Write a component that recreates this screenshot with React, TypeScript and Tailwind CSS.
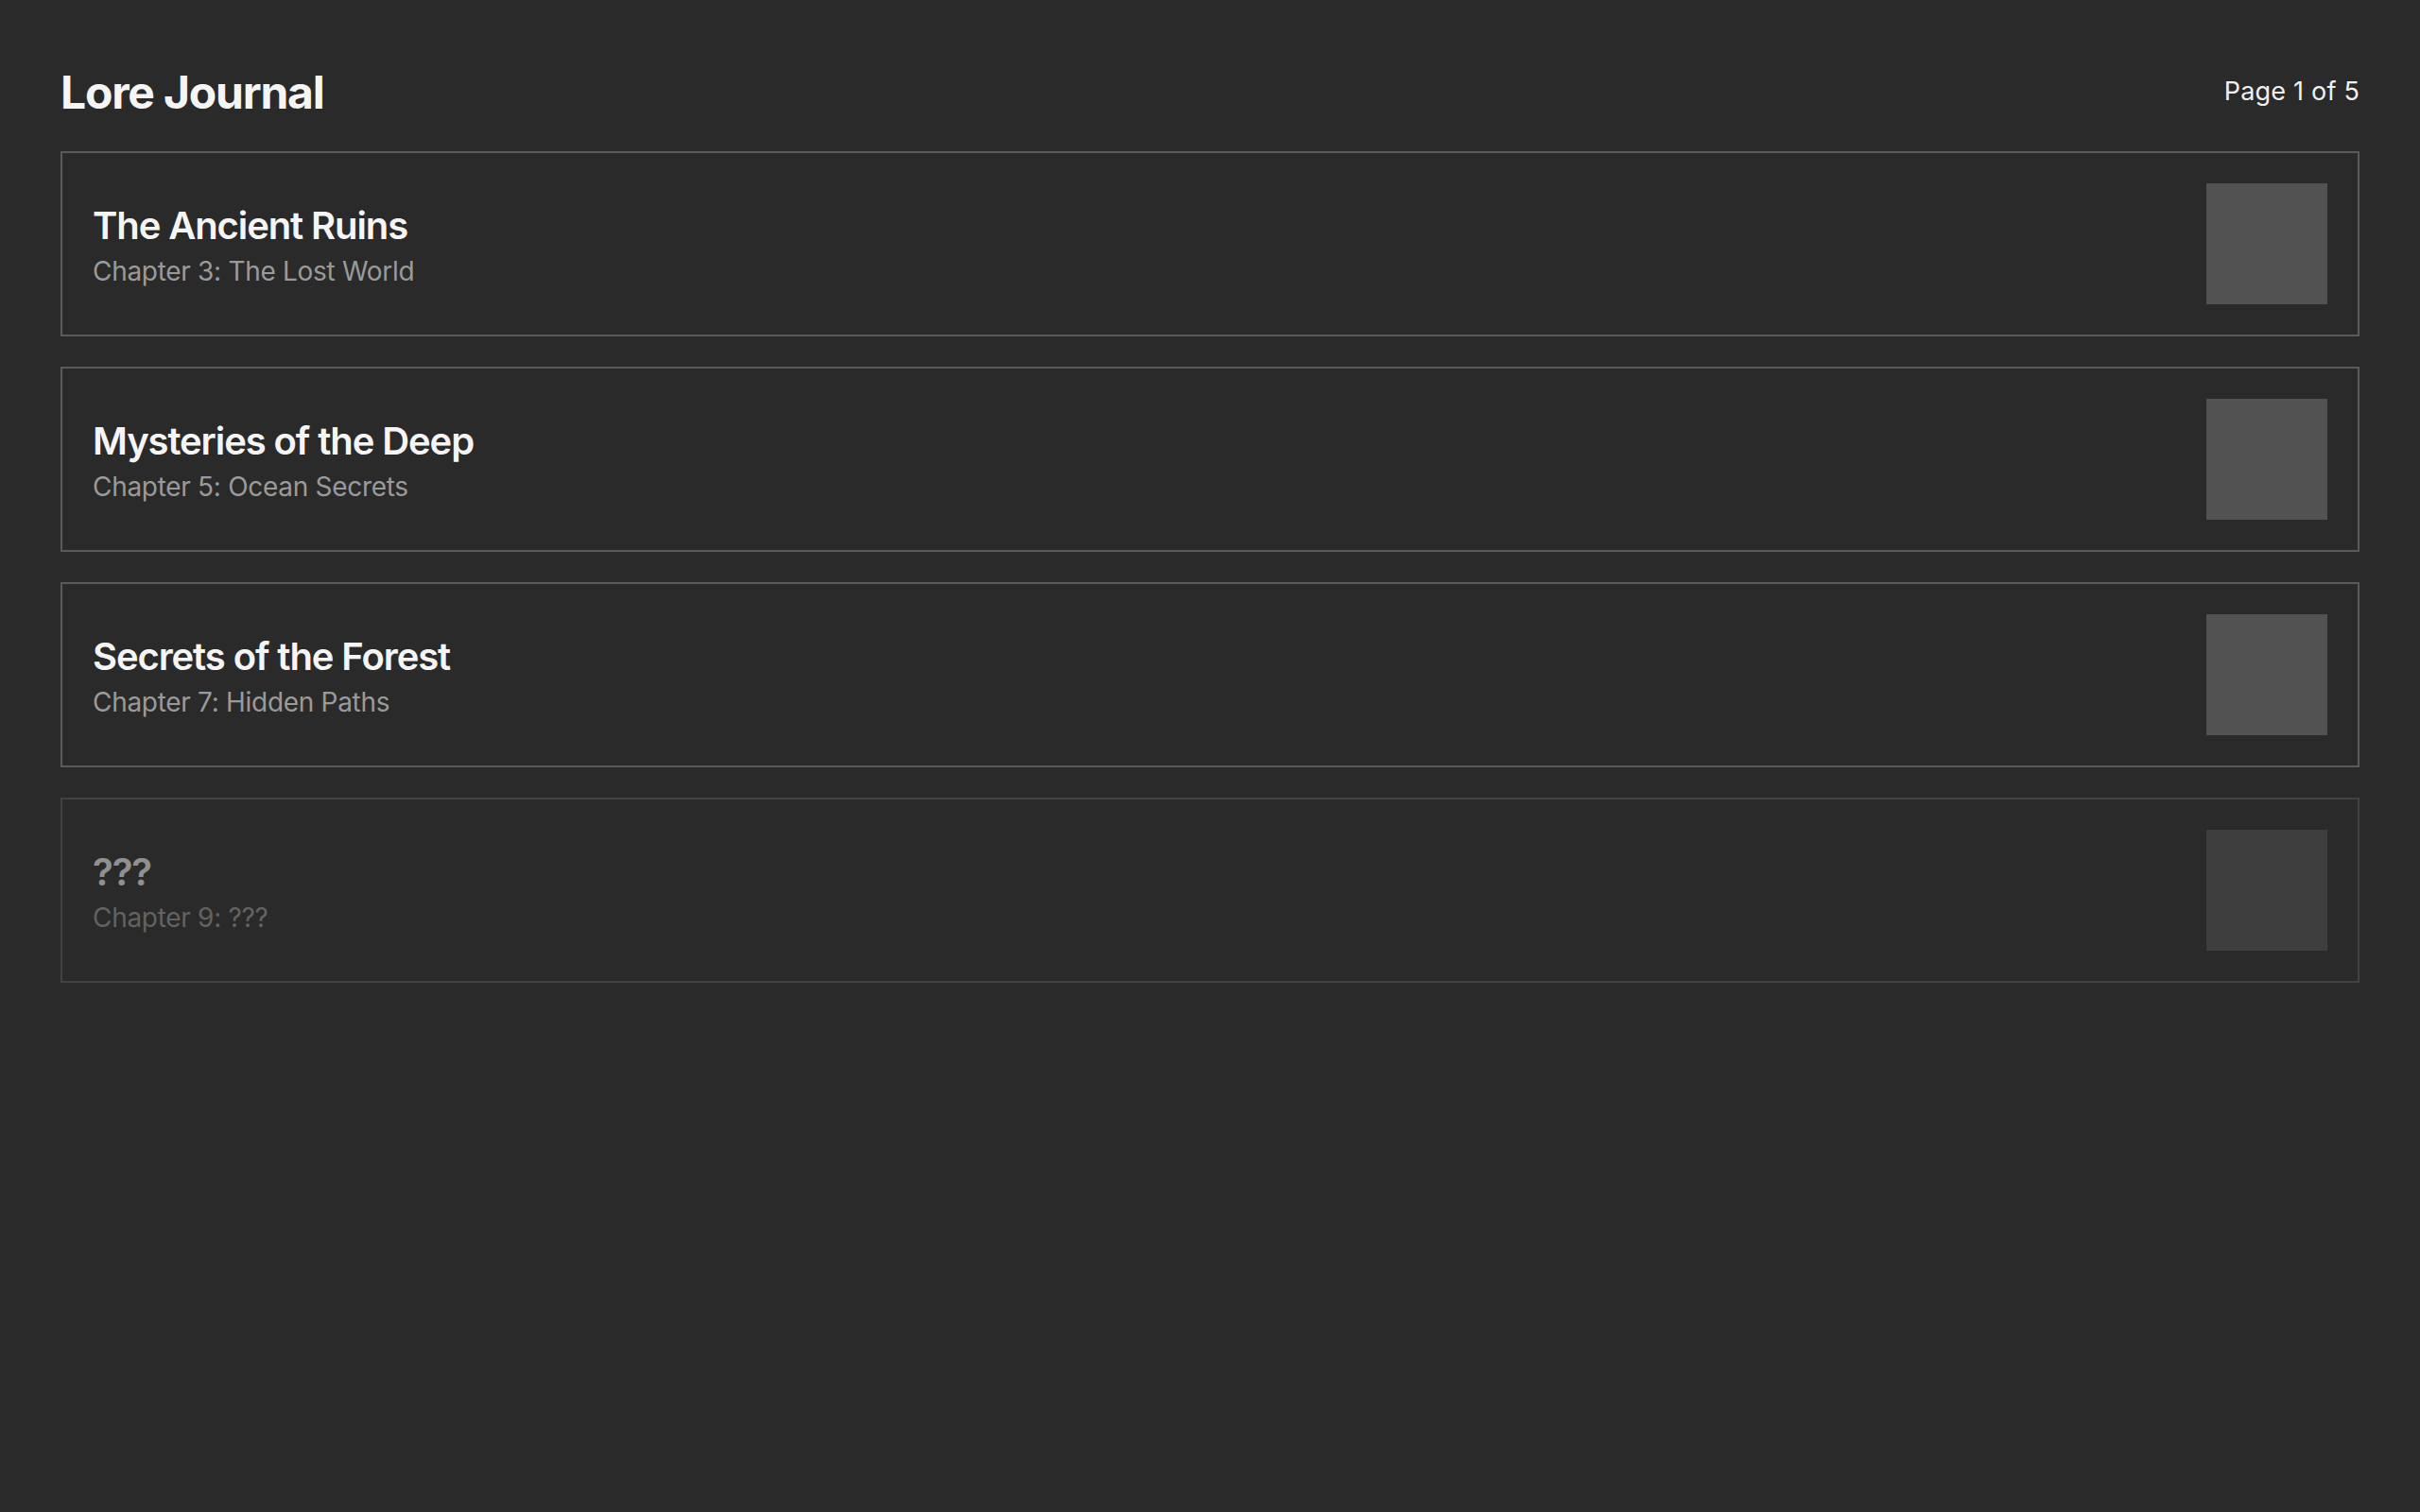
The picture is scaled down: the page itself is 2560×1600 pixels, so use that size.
import React from 'react'

interface Entry {
  title: string
  chapter: string
  locked?: boolean
}

const entries: Entry[] = [
  { title: 'The Ancient Ruins', chapter: 'Chapter 3: The Lost World' },
  { title: 'Mysteries of the Deep', chapter: 'Chapter 5: Ocean Secrets' },
  { title: 'Secrets of the Forest', chapter: 'Chapter 7: Hidden Paths' },
  { title: '???', chapter: 'Chapter 9: ???', locked: true },
]

function EntryCard({ entry }: { entry: Entry }) {
  return (
    <div
      className={
        'flex items-center justify-between border-2 border-[#5a5a5a] p-8' +
        (entry.locked ? ' opacity-50' : '')
      }
    >
      <div className="flex flex-col pt-[4px]">
        <h2 className="text-[40px] leading-[48px] font-semibold tracking-[-1.1px] text-[#f5f5f5]">
          {entry.title}
        </h2>
        <p className="mt-1.5 text-[28px] leading-[36px] tracking-[-0.3px] text-[#9a9a9a]">{entry.chapter}</p>
      </div>
      <div className="h-32 w-32 shrink-0 bg-[#525252]" />
    </div>
  )
}

export default function App() {
  return (
    <div
      className="min-h-screen bg-[#2a2a2a] p-16"
      style={{ fontFamily: 'Inter, "Noto Sans", sans-serif' }}
    >
      <header className="mb-8 flex h-16 items-center justify-between pt-[3px]">
        <h1 className="text-5xl font-bold tracking-[-1.2px] text-[#f5f5f5]">Lore Journal</h1>
        <span className="text-[27px] tracking-[0.2px] text-[#f0f0f0]">Page 1 of 5</span>
      </header>
      <div className="flex flex-col gap-8">
        {entries.map((entry, i) => (
          <EntryCard key={i} entry={entry} />
        ))}
      </div>
    </div>
  )
}
